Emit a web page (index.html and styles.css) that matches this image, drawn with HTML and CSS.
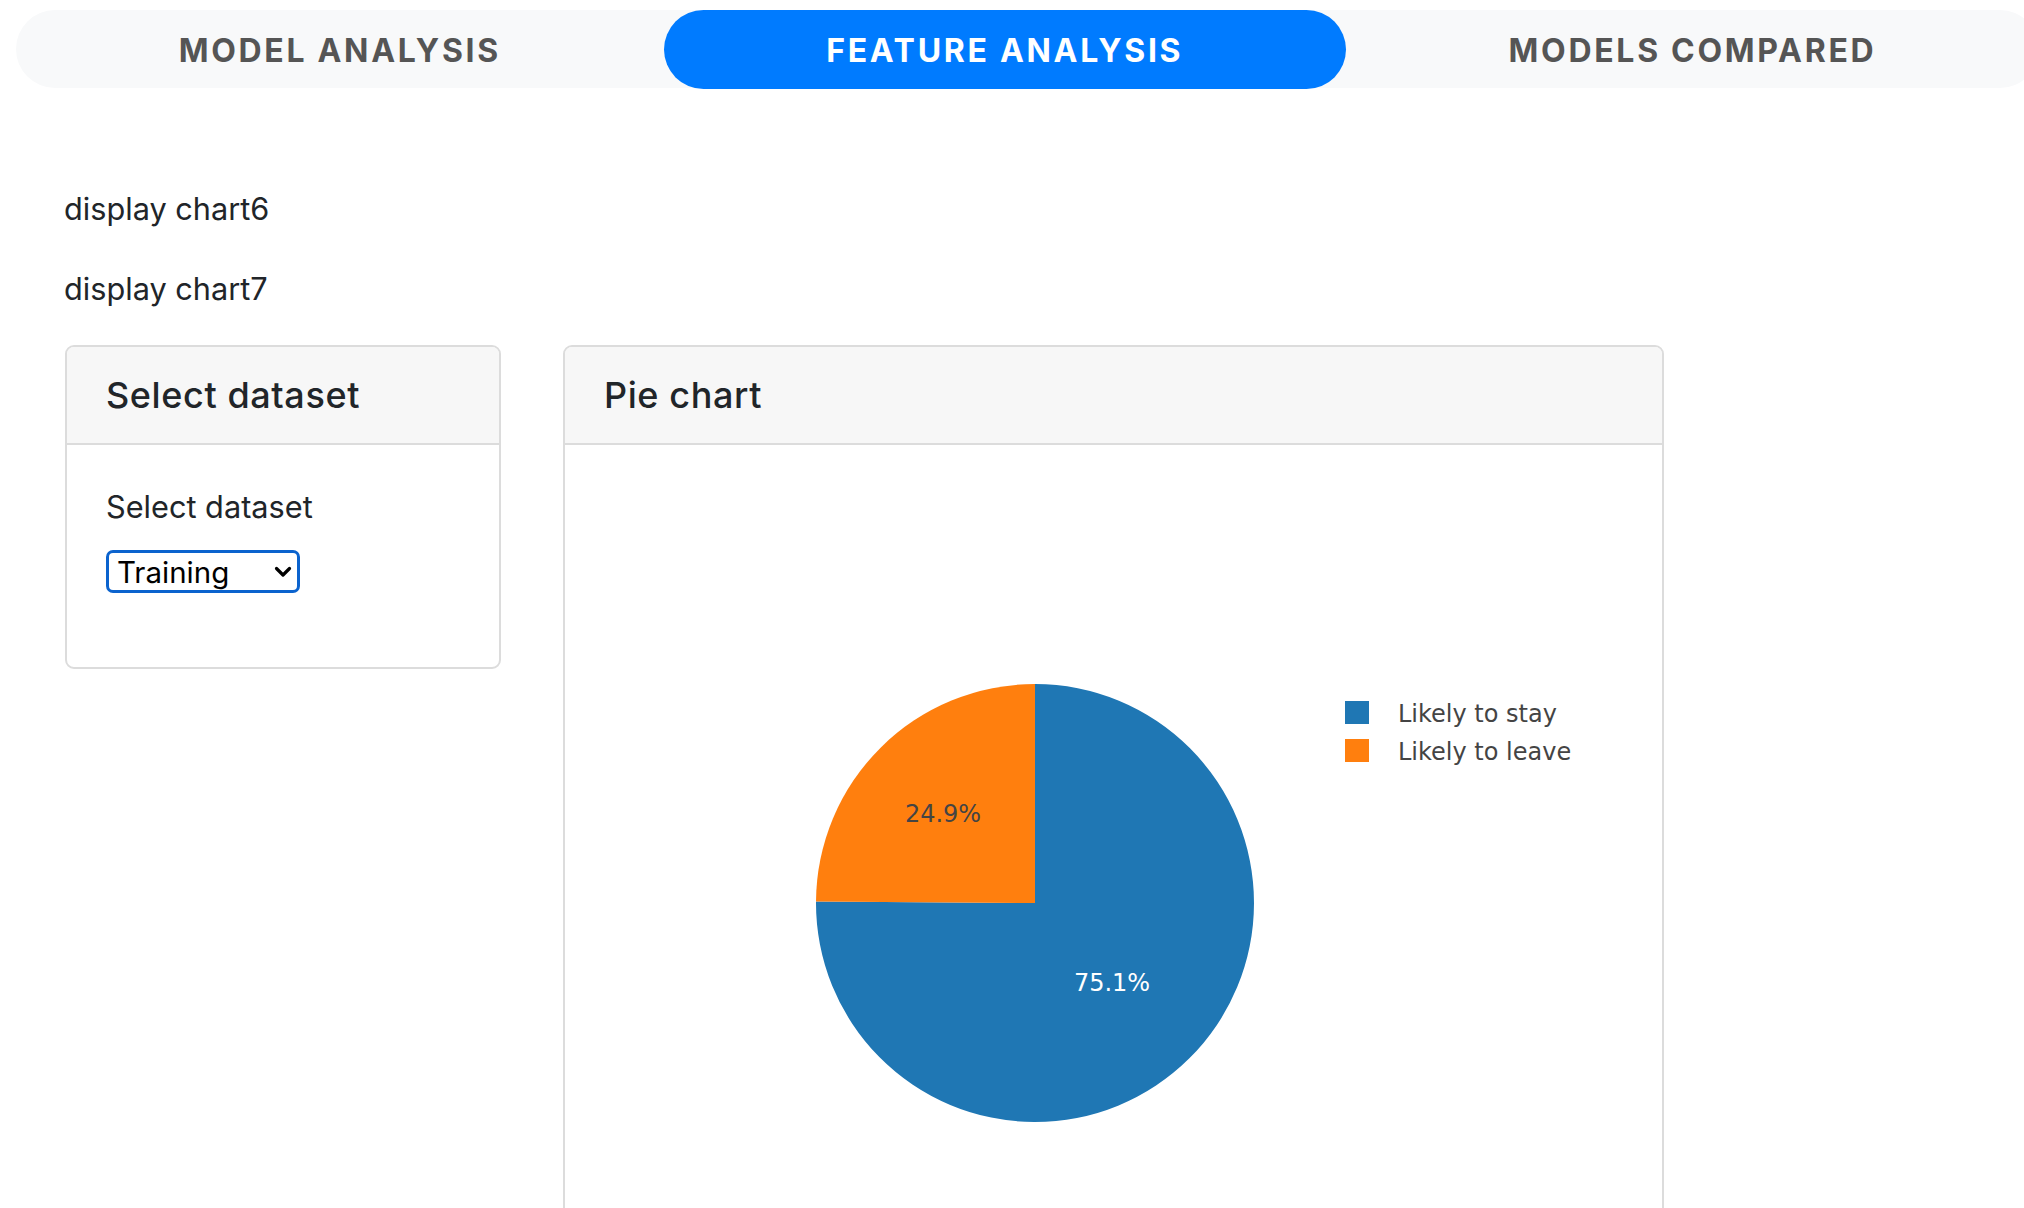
FILE: index.html
```html
<!DOCTYPE html>
<html lang="en">
<head>
<meta charset="utf-8">
<title>Feature analysis</title>
<link rel="stylesheet" href="styles.css">
</head>
<body>
<nav class="tabs">
  <a class="tab" href="#">MODEL ANALYSIS</a>
  <a class="tab active" href="#">FEATURE ANALYSIS</a>
  <a class="tab" href="#">MODELS COMPARED</a>
</nav>
<main class="content">
  <p class="line">display chart6</p>
  <p class="line">display chart7</p>
  <div class="cards">
    <section class="card side">
      <div class="card-header"><h4 class="card-title">Select dataset</h4></div>
      <div class="card-body">
        <label class="field-label" for="ds">Select dataset</label>
        <div class="select-wrap">
          <select id="ds" class="select"><option>Training</option><option>Test</option></select>
          <svg class="chev" width="18" height="12" viewBox="0 0 18 12"><path d="M2.5 2.5 L9 9 L15.5 2.5" fill="none" stroke="#000" stroke-width="3.2" stroke-linecap="round" stroke-linejoin="round"/></svg>
        </div>
      </div>
    </section>
    <section class="card main">
      <div class="card-header"><h4 class="card-title">Pie chart</h4></div>
      <div class="card-body plot">
        <svg class="pie" width="1097" height="820" viewBox="0 0 1097 820">
          <path d="M470 458 L251.004 456.624 A219 219 0 1 0 470 239 Z" fill="#1f77b4"/>
          <path d="M470 458 L470 239 A219 219 0 0 0 251.004 456.624 Z" fill="#ff7f0e"/>
          <text class="slice-text dark" x="378" y="377" text-anchor="middle">24.9%</text>
          <text class="slice-text light" x="547" y="546" text-anchor="middle">75.1%</text>
          <rect x="780" y="256" width="24" height="23" fill="#1f77b4"/>
          <rect x="780" y="294" width="24" height="23" fill="#ff7f0e"/>
          <text class="legend-text" x="833" y="277">Likely to stay</text>
          <text class="legend-text" x="833" y="315">Likely to leave</text>
        </svg>
      </div>
    </section>
  </div>
</main>
</body>
</html>
```

FILE: styles.css
```css
html, body {
  margin: 0;
  padding: 0;
  background: #fff;
}
body {
  overflow-x: hidden;
  font-family: Inter, "Liberation Sans", Arial, sans-serif;
  color: #212529;
  font-size: 30.7px;
  line-height: 1.5;
}

.tabs {
  display: flex;
  margin: 10px 0 0 16px;
  width: calc(100% - 1px);
  height: 78px;
  background: #f8f9fa;
  border-radius: 39px;
}
.tab {
  flex: 1 1 auto;
  display: flex;
  align-items: center;
  justify-content: center;
  box-sizing: border-box;
  height: 79px;
  padding-top: 2px;
  border-radius: 40px;
  text-decoration: none;
  color: #555;
  font-family: Inter, "Liberation Sans", Arial, sans-serif;
  font-weight: 700;
  font-size: 32px;
  letter-spacing: 2.7px;
  white-space: nowrap;
}
.tab.active {
  background: #007bff;
  color: #fff;
}

.content {
  padding: 97px 0 0 64px;
}
.line {
  margin: 0 0 32px;
  line-height: 48px;
}
.cards {
  display: flex;
  align-items: flex-start;
  gap: 62px;
  margin-left: 1px;
}
.card {
  border: 2px solid #dcdcdc;
  border-radius: 9px;
  background: #fff;
  overflow: hidden;
  box-sizing: border-box;
}
.card.side { width: 436px; }
.card.main { width: 1101px; }
.card-header {
  background: #f7f7f7;
  border-bottom: 2px solid #dcdcdc;
  padding: 24px 39px;
}
.card-title {
  margin: 0;
  font-size: 36px;
  font-weight: 500;
  letter-spacing: 0.6px;
  line-height: 48px;
}
.card-body {
  padding: 38px 39px 74px;
}
.card-body.plot {
  padding: 0;
}
.field-label {
  display: block;
  line-height: 48px;
  margin-bottom: 19px;
}
.select-wrap {
  position: relative;
  width: 194px;
}
.select {
  appearance: none;
  -webkit-appearance: none;
  display: block;
  box-sizing: border-box;
  width: 194px;
  height: 43px;
  margin: 0;
  padding: 0 0 0 8px;
  border: 3px solid #0b63ce;
  border-radius: 7px;
  background: #fff;
  color: #000;
  font-family: Inter, "Liberation Sans", Arial, sans-serif;
  font-size: 29.5px;
  outline: none;
}
.chev {
  position: absolute;
  right: 8px;
  top: 16px;
  pointer-events: none;
}
.pie { display: block; }
.slice-text {
  font-family: "DejaVu Sans", Verdana, sans-serif;
  font-size: 24px;
}
.slice-text.dark { fill: #444; }
.slice-text.light { fill: #fff; }
.legend-text {
  font-family: "DejaVu Sans", Verdana, sans-serif;
  font-size: 24px;
  fill: #444;
}
```
